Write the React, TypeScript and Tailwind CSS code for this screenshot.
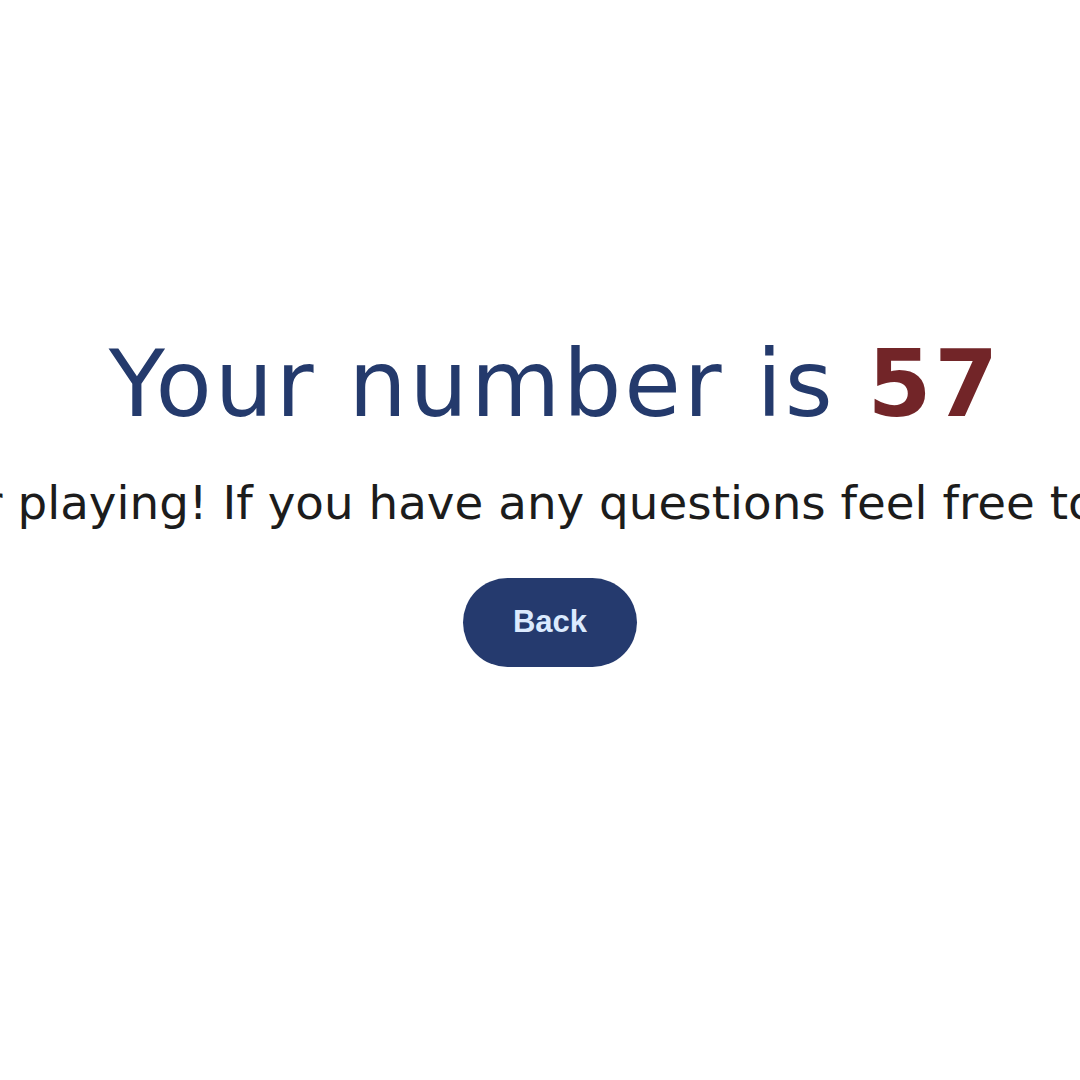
export default function App() {
  return (
    <div
      className="w-full h-screen overflow-hidden bg-white flex flex-col items-center pt-[330px] pl-[20px]"
      style={{ fontFamily: '"DejaVu Sans", sans-serif' }}
    >
      <h1 className="pl-[10px] text-[92px] leading-[1.2] tracking-[2.8px] text-[#243a6c] whitespace-nowrap">
        Your number is <span className="font-bold text-[#722528]">57</span>
      </h1>
      <p className="mt-[36px] pl-[46px] text-[46.8px] leading-[1.18] text-[#1c1c1c] whitespace-nowrap">
        Thanks for playing! If you have any questions feel free to contact me.
      </p>
      <button
        className="mt-[46px] w-[174px] h-[89px] rounded-full bg-[#253a6e] text-[#dbeafe] text-[31px] font-bold"
        style={{ fontFamily: '"Liberation Sans", Arial, sans-serif' }}
      >
        Back
      </button>
    </div>
  );
}
